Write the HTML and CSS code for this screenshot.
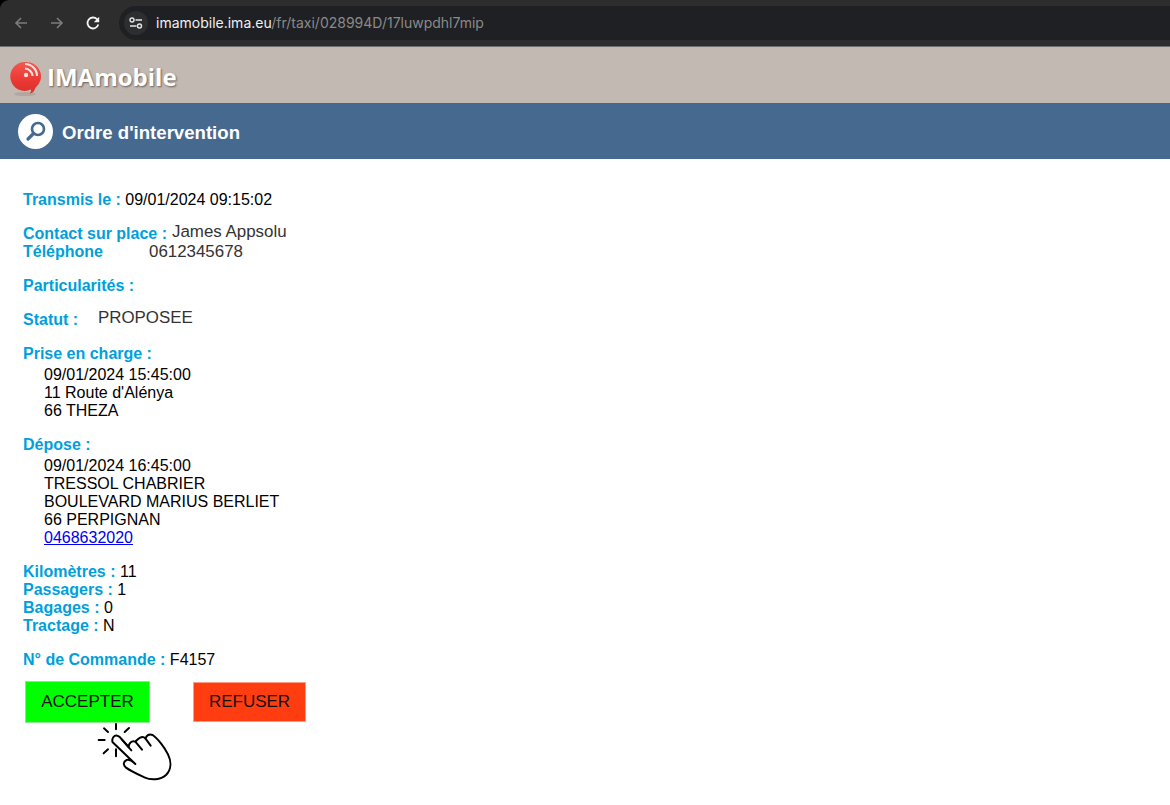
FILE: index.html
```html
<!DOCTYPE html>
<html lang="fr">
<head>
<meta charset="utf-8">
<title>Ordre d'intervention</title>
<link rel="stylesheet" href="styles.css">
</head>
<body>
<div class="chrome">
  <div class="toolbar">
    <div class="nav">
      <svg class="nav-icon" width="16" height="16" viewBox="0 0 16 16"><path d="M14 8H3M8 3 3 8l5 5" fill="none" stroke="#7c7c7c" stroke-width="1.6"/></svg>
      <svg class="nav-icon" width="16" height="16" viewBox="0 0 16 16"><path d="M2 8h11M8 3l5 5-5 5" fill="none" stroke="#7c7c7c" stroke-width="1.6"/></svg>
      <svg class="nav-icon" width="16" height="16" viewBox="0 0 16 16"><path d="M13.300 9.500A5.500 5.500 0 1 1 12 4.200L13.400 6" fill="none" stroke="#f4f4f4" stroke-width="1.800"/><path d="M14.200 1.800v5.400H8.800z" fill="#f4f4f4"/></svg>
    </div>
    <div class="omnibox">
      <span class="tune">
        <svg width="14" height="12" viewBox="0 0 14 12"><circle cx="3" cy="3" r="2" fill="none" stroke="#e6e6e6" stroke-width="1.400"/><path d="M6.500 3H13M1 9h6.500" stroke="#e6e6e6" stroke-width="1.400"/><circle cx="10.500" cy="9" r="2" fill="none" stroke="#e6e6e6" stroke-width="1.400"/></svg>
      </span>
      <span class="url"><span class="host">imamobile.ima.eu</span>/fr/taxi/028994D/17luwpdhl7mip</span>
    </div>
  </div>
</div>
<header class="brand">
  <svg class="brand-logo" width="32" height="36" viewBox="0 0 32 36">
    <defs><linearGradient id="red" x1="0" y1="0" x2="0" y2="1"><stop offset="0" stop-color="#ef5a50"/><stop offset=".5" stop-color="#ee3b36"/><stop offset="1" stop-color="#d9302b"/></linearGradient></defs>
    <ellipse cx="15" cy="33" rx="11" ry="2" fill="#a89f99" opacity=".7"/>
    <path d="M15 1a14.500 14.500 0 1 0 6 27.600c.2 1.700-.5 3-1.500 4.200 3-.6 5-2.400 6-6A14.500 14.500 0 0 0 15 1z" fill="url(#red)"/>
    <g fill="none" stroke="#fbe0dc" stroke-width="2.200"><path d="M15 3a12 12 0 0 1 12 12"/><path d="M15 7.500a8 8 0 0 1 7.500 7.500"/></g>
    <circle cx="16" cy="14" r="2.200" fill="#fbe0dc"/>
  </svg>
  <span class="brand-name">IMAmobile</span>
</header>
<div class="titlebar">
  <span class="badge">
    <svg width="24" height="24" viewBox="0 0 24 24"><circle cx="14" cy="10" r="6" fill="none" stroke="#46698f" stroke-width="2.600"/><path d="M9.500 14.500 4 20" stroke="#46698f" stroke-width="3.200" stroke-linecap="round"/></svg>
  </span>
  <h1 class="title">Ordre d'intervention</h1>
</div>
<main class="content">
  <p class="block"><b>Transmis le :</b> 09/01/2024 09:15:02</p>
  <div class="block contact">
    <div class="row"><b>Contact sur place :</b><span class="soft raise contact-name">James Appsolu</span></div>
    <div class="row"><b class="phone-label">Téléphone</b><span class="soft phone">0612345678</span></div>
  </div>
  <p class="block"><b>Particularités :</b></p>
  <div class="block row"><b class="status-label">Statut :</b><span class="soft raise status">PROPOSEE</span></div>
  <div class="block">
    <b>Prise en charge :</b>
    <div class="address">09/01/2024 15:45:00<br>11 Route d'Alénya<br>66 THEZA</div>
  </div>
  <div class="block">
    <b>Dépose :</b>
    <div class="address">09/01/2024 16:45:00<br>TRESSOL CHABRIER<br>BOULEVARD MARIUS BERLIET<br>66 PERPIGNAN<br><a href="#">0468632020</a></div>
  </div>
  <div class="block">
    <b>Kilomètres :</b> 11<br>
    <b>Passagers :</b> 1<br>
    <b>Bagages :</b> 0<br>
    <b>Tractage :</b> N
  </div>
  <p class="block"><b>N° de Commande :</b> F4157</p>
  <div class="actions">
    <div class="accept-wrap">
      <button class="btn accept">ACCEPTER</button>
      <svg class="hand" width="90" height="70" viewBox="0 0 270 210">
        <g stroke="#000" stroke-width="6" fill="none" stroke-linecap="round" stroke-linejoin="round">
          <path d="M78 27v16M42 40l12 11M117 39l-13 12M26 75h18M41 115l13-12M78 103v21"/>
          <path fill="#fff" d="M68 82C64 70 72 60 82 62 88 63 92 68 96 74L116 96C116 86 124 76 136 80 144 72 148 66 158 66 162 66 164 68 166 70 170 62 178 56 188 60 203 70 224 98 234 118 246 143 242 166 228 180 212 195 183 196 163 187 148 180 125 170 108 158 98 150 100 139 110 135 118 133 128 139 136 147Z"/>
          <path d="M96 74l28 32M136 80l20 24M166 70l16 22"/>
        </g>
      </svg>
    </div>
    <button class="btn refuse">REFUSER</button>
  </div>
</main>
</body>
</html>
```
FILE: styles.css
```css
* { box-sizing: border-box; }
html, body { margin: 0; padding: 0; }
body { background: #fff; color: #000; font: 16px/18px "Liberation Sans", Arial, sans-serif; overflow: hidden; height: 805px; }

.chrome { height: 47px; background: #000; border-bottom: 1px solid #6e6e6e; }
.toolbar { height: 46px; background: #2d2d2d; border-radius: 9px 0 0 0; padding-top: 6px; display: flex; align-items: flex-start; }
.nav { width: 119px; display: flex; gap: 20px; padding: 9px 0 0 13px; flex: none; }
.nav-icon { display: block; }
.omnibox { flex: 1; height: 34px; background: #1f2023; border-radius: 17px 0 0 17px; display: flex; align-items: center; padding-left: 5px; font: 14px "Inter", "Liberation Sans", sans-serif; }
.tune { width: 24px; height: 24px; border-radius: 50%; background: #2d2e30; display: flex; align-items: center; justify-content: center; margin-right: 8px; }
.url { color: #8a8a8a; font-size: 14px; margin-bottom: 2px; }
.host { color: #f0f0f0; }

.brand { height: 56px; background: #c3b9b3; display: flex; align-items: flex-start; padding: 14px 0 0 10px; }
.brand-logo { display: block; flex: none; }
.brand-name { font: bold 24px/32px "Open Sans", "Liberation Sans", sans-serif; color: #fff; margin-left: 5px; text-shadow: 1px 1px 2px #6b5f58; }

.titlebar { height: 56px; background: #46698f; display: flex; align-items: center; padding: 0 0 0 18px; gap: 9px; }
.badge { width: 35px; height: 35px; border-radius: 50%; background: #fff; display: flex; align-items: center; justify-content: center; }
.title { margin: 4px 0 0; color: #fff; font: bold 18.600px/22px "Liberation Sans", sans-serif; }

.content { padding: 32px 0 0 23px; }
.block { margin: 0 0 16px; }
.block b { color: #009fdc; }
.row { display: flex; align-items: baseline; }
.soft { color: #333; font-size: 16.900px; }
.raise { position: relative; top: -2px; }
.contact-name { margin-left: 5px; }
.phone-label { width: 126px; }
.status-label { width: 75px; }
.address { margin-top: 3px; padding-left: 21px; }
.address a { color: #00e; }

.actions { display: flex; align-items: flex-start; margin: -4px 0 0 2px; }
.accept-wrap { position: relative; margin-right: 43px; }
.btn { display: block; border: 1px solid #8fe88f; font: 17px "Liberation Sans", sans-serif; color: #111; padding: 0; }
.accept { width: 125px; height: 42px; background: #00ff00; }
.refuse { width: 113px; height: 40px; margin-top: 1px; background: #ff3d11; border-color: #ff9b85; }
.hand { position: absolute; left: 65px; top: 34px; }
```
